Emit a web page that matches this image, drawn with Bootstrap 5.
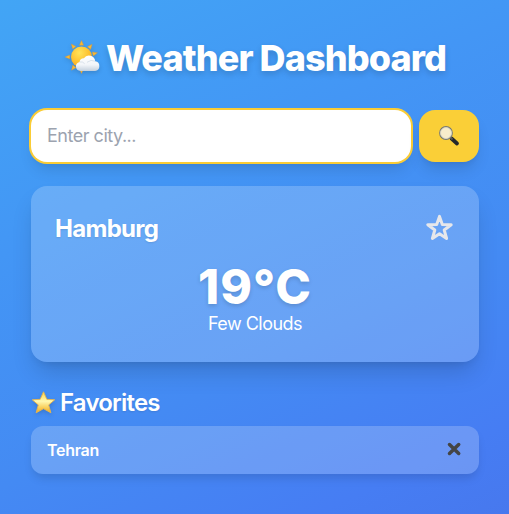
<!DOCTYPE html>
<html lang="en">
<head>
<meta charset="utf-8">
<meta name="viewport" content="width=device-width, initial-scale=1">
<title>Weather Dashboard</title>
<link href="https://cdn.jsdelivr.net/npm/bootstrap@5.3.0/dist/css/bootstrap.min.css" rel="stylesheet">
<style>
body{font-family:Inter,"Liberation Sans",sans-serif;background:linear-gradient(155deg,#42a5f5 0%,#4396f5 34%,#448af3 65%,#467df3 88%,#4778ee 100%);height:514px;overflow:hidden}
main{padding:36px 30px 0 31px}
svg{display:block;flex:none}
.title{font-size:36px;line-height:44px;font-weight:800;height:44px;letter-spacing:-.9px;text-shadow:0 3px 6px rgba(0,0,0,.16);white-space:nowrap;padding-right:2px}
.search{margin-top:30px;height:52px}
.city{height:52px;border:0;border-radius:16px;padding:0 16px 2px;font-size:18px;box-shadow:0 0 0 2px #facc36,0 10px 15px -3px rgba(0,0,0,.12),0 4px 6px -4px rgba(0,0,0,.1)!important}
.city::placeholder{color:#9ca3af;letter-spacing:-.48px}
.go{width:60px;height:52px;border:0;border-radius:16px;background:#facf37;padding:0;box-shadow:0 10px 15px -3px rgba(0,0,0,.12),0 4px 6px -4px rgba(0,0,0,.1)}
.glass{background:rgba(255,255,255,.2);border:0}
.weather{margin-top:24px;height:176px;border-radius:16px;padding:24px;box-shadow:0 14px 24px -5px rgba(0,0,0,.16),0 6px 10px -6px rgba(0,0,0,.12)}
.place{font-size:24px;line-height:38px;font-weight:700;letter-spacing:-.7px;text-shadow:0 1px 2px rgba(0,0,0,.1)}
.temp{margin-top:15px;font-size:48px;line-height:48px;font-weight:800;letter-spacing:1px;text-shadow:0 2px 4px rgba(0,0,0,.15)}
.sky{font-size:18px;line-height:26px;letter-spacing:-.52px}
.favhead{margin-top:25px;height:32px;font-size:24px;line-height:32px;font-weight:600;letter-spacing:-.8px;text-shadow:0 1px 2px rgba(0,0,0,.1)}
.favitem{margin-top:7px;height:48px;border-radius:12px;padding:0 17px 0 16px;font-weight:600;font-size:16px;letter-spacing:-.3px;box-shadow:0 6px 10px -2px rgba(0,0,0,.13)}
.drop{filter:drop-shadow(0 2px 2px rgba(0,0,0,.15))}
</style>
<script src="https://cdn.jsdelivr.net/npm/bootstrap@5.3.0/dist/js/bootstrap.bundle.min.js"></script>
</head>
<body class="text-white">
<main>
<h1 class="title d-flex justify-content-center align-items-center mb-0" id="title">
<svg class="drop me-1" width="40" height="40" viewBox="0 0 40 40" aria-hidden="true">
<defs><radialGradient id="sun" cx=".4" cy=".3" r=".75"><stop offset="0" stop-color="#ffe45a"/><stop offset=".65" stop-color="#fdbf2d"/><stop offset="1" stop-color="#f49b20"/></radialGradient>
<linearGradient id="cloud" x2="0" y2="1"><stop offset="0" stop-color="#fff"/><stop offset=".6" stop-color="#f2f5f9"/><stop offset="1" stop-color="#c4d0dd"/></linearGradient></defs>
<g transform="translate(19.5 19)" fill="#fbb92f" stroke="#c99345" stroke-width=".4"><path id="ray" d="M-2.100-11.700L0-16.500L2.100-11.700z"/><use href="#ray" transform="rotate(40)"/><use href="#ray" transform="rotate(75)"/><use href="#ray" transform="rotate(180)"/><use href="#ray" transform="rotate(217)"/><use href="#ray" transform="rotate(270)"/><use href="#ray" transform="rotate(322)"/></g>
<circle cx="19.500" cy="19" r="10.500" fill="url(#sun)"/>
<path d="M18.500 33a4.600 4.600 0 0 1-.9-9.100a4.200 4.200 0 0 1 4.300-3.700a6.200 6.200 0 0 1 11.300 3a4.950 4.950 0 0 1-.2 9.800z" fill="url(#cloud)"/>
<path d="M17.600 24q3.200-.8 5 1.700M25 24.300q4-3.200 8.200-1.100" fill="none" stroke="#ccd7e3" stroke-width=".7"/>
</svg><span>Weather Dashboard</span></h1>
<div class="search d-flex gap-2">
<input class="form-control city" type="text" placeholder="Enter city..." aria-label="City">
<button class="btn go d-flex align-items-center justify-content-center flex-shrink-0" aria-label="Search">
<svg width="22" height="22" viewBox="0 0 22 22"><path d="M13.500 13.500l5.500 5" stroke="#24282b" stroke-width="3.800" stroke-linecap="round"/><path d="M12 12l2.500 2.500" stroke="#555" stroke-width="1.800"/><circle cx="8" cy="8" r="6.300" fill="#f8edcb" stroke="#777972" stroke-width="1.200"/><circle cx="8" cy="8" r="5.500" fill="none" stroke="#d7d6c8" stroke-width=".8"/></svg>
</button>
</div>
<section class="card glass weather text-white">
<div class="d-flex justify-content-between align-items-center">
<h2 class="place mb-0">Hamburg</h2>
<svg width="30" height="34" viewBox="0 0 30 34" fill="none" stroke="#e6e7eb" stroke-width="3" stroke-linejoin="round"><path d="M14.500 4.400L17.300 12.400L26.200 12.700L19.200 18L21.600 26.500L14.500 21.800L7.400 26.500L9.800 18L2.800 12.700L11.700 12.400z"/></svg>
</div>
<div class="text-center"><div class="temp">19°C</div><div class="sky">Few Clouds</div></div>
</section>
<h2 class="favhead d-flex align-items-center mb-0">
<svg class="drop" width="25" height="24" viewBox="0 0 24 24"><defs><linearGradient id="gold" x2="0" y2="1"><stop offset="0" stop-color="#fbd447"/><stop offset=".45" stop-color="#fff8b0"/><stop offset="1" stop-color="#f4ad16"/></linearGradient></defs><path d="M12 .8L15.300 8.300L23.200 8.800L17.200 13.900L19.400 21.800L12 17.700L4.600 21.800L6.800 13.900L.8 8.800L8.700 8.300z" fill="url(#gold)" stroke="#e9b44b" stroke-width=".9" stroke-linejoin="round"/></svg>
<span class="ms-1">Favorites</span></h2>
<div class="glass favitem d-flex justify-content-between align-items-center">
<span>Tehran</span>
<svg width="16" height="18" viewBox="0 0 16 18"><path d="M3.500 3.500l9.200 9M12.700 3.500l-9.200 9" stroke="#444545" stroke-width="3.500" stroke-linecap="round"/></svg>
</div>
</main>
</body>
</html>
